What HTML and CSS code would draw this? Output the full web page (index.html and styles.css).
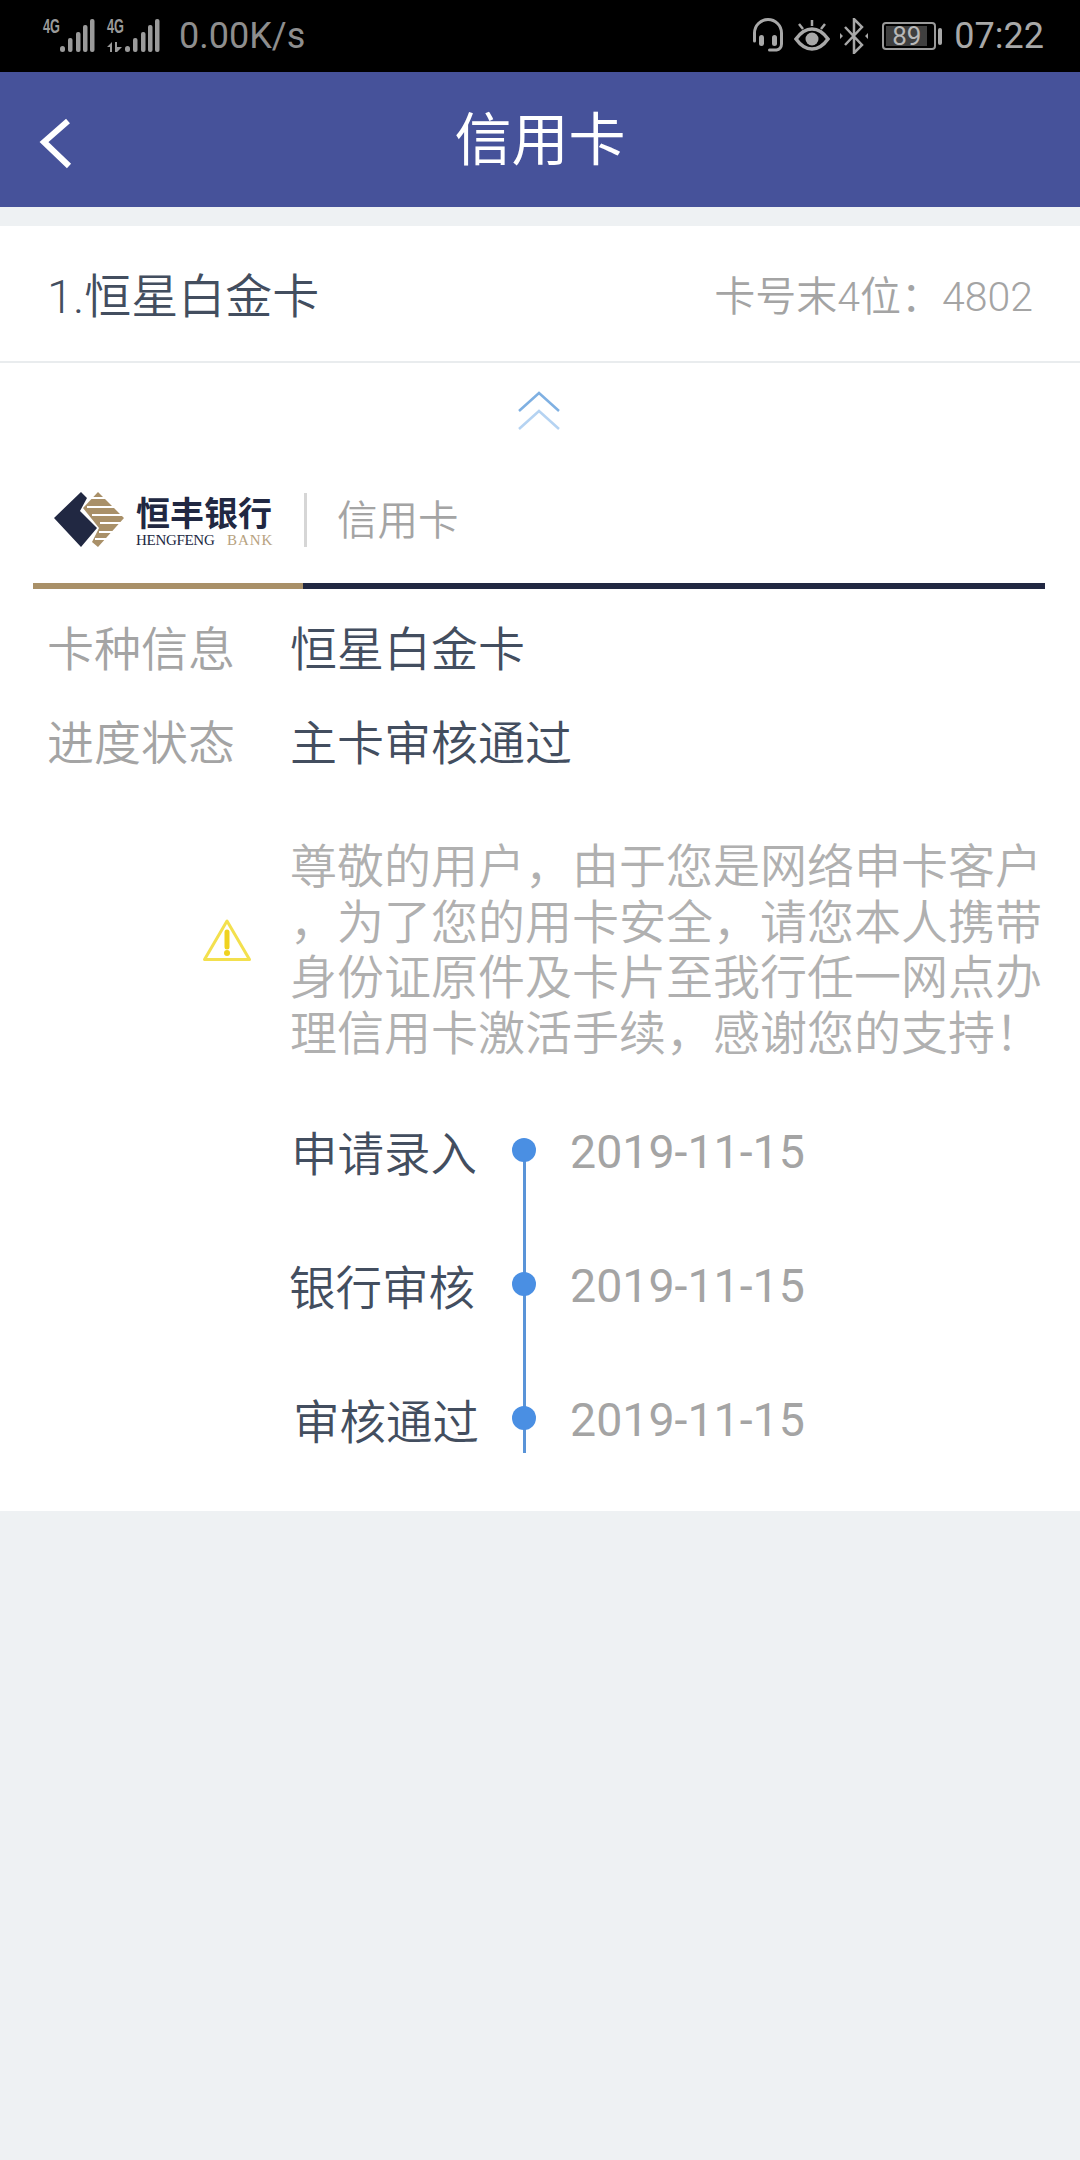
FILE: index.html
```html
<!DOCTYPE html>
<html lang="zh-CN">
<head>
<meta charset="utf-8">
<title>信用卡</title>
<link rel="stylesheet" href="styles.css">
</head>
<body>
<div class="status">
  <div class="status-side">
    <svg class="sig" width="56" height="36" viewBox="0 0 56 36"><text x="2" y="15" class="sig-t" textLength="17" lengthAdjust="spacingAndGlyphs">4G</text><g fill="#9a9a9a"><rect x="19" y="28" width="5" height="6" rx="2.500"/><rect x="27" y="20" width="4.500" height="14" rx="2"/><rect x="35" y="14" width="4.500" height="20" rx="2"/><rect x="42" y="7" width="4.500" height="27" rx="2"/><rect x="49" y="1" width="4.500" height="33" rx="2"/></g></svg>
    <svg class="sig sig2" width="56" height="36" viewBox="0 0 56 36"><text x="2" y="15" class="sig-t" textLength="17" lengthAdjust="spacingAndGlyphs">4G</text><g fill="#9a9a9a"><path d="M2 29l5-5v10H5v-5zM10 24h2v5l5 0-5 5h-2z"/><rect x="20" y="28" width="5" height="6" rx="2.500"/><rect x="28" y="20" width="4.500" height="14" rx="2"/><rect x="36" y="14" width="4.500" height="20" rx="2"/><rect x="43" y="7" width="4.500" height="27" rx="2"/><rect x="50" y="1" width="4.500" height="33" rx="2"/></g></svg>
    <span class="speed">0.00K/s</span>
  </div>
  <div class="status-side status-right">
    <svg width="32" height="36" viewBox="0 0 32 36" fill="none" stroke="#a8a8a8"><path d="M2.500 23V15a13.500 13.500 0 0 1 27 0v11a6 6 0 0 1-5 6h-7" stroke-width="3" stroke-linecap="round"/><rect x="7" y="17" width="5" height="11" rx="2.500" fill="#a8a8a8" stroke="none"/><rect x="20" y="17" width="5" height="11" rx="2.500" fill="#a8a8a8" stroke="none"/></svg>
    <svg class="eye" width="36" height="32" viewBox="0 0 36 32" fill="none" stroke="#a8a8a8" stroke-width="3.500"><path d="M2 19C7 12 12 9 18 9s11 3 16 10c-5 7-10 10-16 10S7 26 2 19z"/><circle cx="18" cy="19" r="6.500" fill="#a8a8a8" stroke="none"/><path d="M18 0v6M5 4l4 5M31 4l-4 5" stroke-width="2.500"/></svg>
    <svg class="bt" width="28" height="36" viewBox="0 0 28 36" fill="none" stroke="#a8a8a8" stroke-width="2.500"><path d="M5 9l17 18-8 8V1l8 8L5 27"/><path d="M0 15v6l3-3zM28 15v6l-3-3z" fill="#a8a8a8" stroke="none"/></svg>
    <div class="battery"><span class="battery-level">89</span></div><span class="battery-tip"></span>
    <span class="clock">07:22</span>
  </div>
</div>
<header class="nav">
  <svg class="back" width="34" height="52" viewBox="0 0 34 52" fill="none" stroke="#fff" stroke-width="6"><path d="M29 3L5 24l25 24"/></svg>
  <h1 class="nav-title">信用卡</h1>
</header>
<main class="card">
  <div class="card-head">
    <span class="card-name">1.恒星白金卡</span>
    <span class="card-no">卡号末4位：4802</span>
  </div>
  <div class="collapse">
    <svg width="42" height="40" viewBox="0 0 42 40" fill="none" stroke-width="2.500"><path d="M1 20L21 2l20 18" stroke="#7fb0e2"/><path d="M1 38L21 20l20 18" stroke="#b5d3f2"/></svg>
  </div>
  <div class="brand">
    <svg class="brand-mark" width="72" height="60" viewBox="0 0 72 60"><path d="M0 28L27 2l6 6-7 13 17 17-16 19z" fill="#212842"/><path d="M44 2l26 26-26 29-6-5 7-14-16-20z" fill="#a99068"/><path d="M35 8h24M33 17h33M38 25h33M46 33h25M45 42h21M41 49h15" stroke="#fff" stroke-width="1.800"/></svg>
    <div class="brand-name">
      <span class="brand-cn">恒丰银行</span>
      <span class="brand-en">HENGFENG <em>BANK</em></span>
    </div>
    <span class="brand-sep"></span>
    <span class="brand-sub">信用卡</span>
  </div>
  <div class="rule"><span class="rule-gold"></span><span class="rule-navy"></span></div>
  <div class="info">
    <div class="info-row"><span class="info-key">卡种信息</span><span class="info-val">恒星白金卡</span></div>
    <div class="info-row"><span class="info-key">进度状态</span><span class="info-val">主卡审核通过</span></div>
  </div>
  <div class="notice">
    <div class="notice-icon">
      <svg width="50" height="44" viewBox="0 0 50 44" fill="none"><path d="M25 3L2.500 41.500h45z" stroke="#f3e04e" stroke-width="3" stroke-linejoin="round"/><path d="M25 14v15" stroke="#efd21f" stroke-width="5" stroke-linecap="round"/><circle cx="25" cy="35" r="3" fill="#efd21f"/></svg>
    </div>
    <div class="notice-text">
      <span class="notice-line">尊敬的用户，由于您是网络申卡客户</span>
      <span class="notice-line">，为了您的用卡安全，请您本人携带</span>
      <span class="notice-line">身份证原件及卡片至我行任一网点办</span>
      <span class="notice-line">理信用卡激活手续，感谢您的支持！</span>
    </div>
  </div>
  <ol class="timeline">
    <li class="step"><span class="step-name step-a">申请录入</span><span class="step-node"></span><span class="step-date">2019-11-15</span></li>
    <li class="step"><span class="step-name">银行审核</span><span class="step-node"></span><span class="step-date">2019-11-15</span></li>
    <li class="step step-last"><span class="step-name step-c">审核通过</span><span class="step-node"></span><span class="step-date">2019-11-15</span></li>
  </ol>
</main>
</body>
</html>
```
FILE: styles.css
```css
* { box-sizing: border-box; }
html, body { margin: 0; padding: 0; }
body {
  width: 1080px;
  height: 2160px;
  background: #eef1f3;
  font-family: Roboto, "Noto Sans CJK SC", sans-serif;
  overflow: hidden;
}
.status {
  height: 72px;
  background: #000;
  display: flex;
  justify-content: space-between;
  align-items: center;
  padding: 0 36px 0 41px;
  color: #a3a3a3;
}
.status-side { display: flex; align-items: center; }
.sig-t { font: 700 20px "Liberation Sans", sans-serif; fill: #9a9a9a; }
.sig { display: block; overflow: visible; }
.sig2 { margin-left: 8px; }
.speed { font-size: 36px; font-weight: 400; color: #8e8e8e; margin-left: 18px; }
.eye { margin-left: 10px; }
.bt { margin-left: 10px; }
.battery {
  margin-left: 14px;
  width: 54px;
  height: 28px;
  border: 2px solid #9a9a9a;
  border-radius: 4px;
  padding: 2px;
  display: flex;
}
.battery-level {
  width: 41px;
  background: #3f3f3f;
  color: #b8b8b8;
  font-size: 26px;
  line-height: 20px;
  text-align: center;
}
.battery-tip { width: 4px; height: 17px; background: #a8a8a8; border-radius: 2px; margin-left: 2px; }
.clock { font-size: 36px; font-weight: 400; color: #a8a8a8; margin-left: 12px; }
.nav {
  height: 135px;
  background: #46529a;
  position: relative;
  display: flex;
  align-items: center;
  justify-content: center;
}
.back { position: absolute; left: 39px; top: 46px; }
.nav-title { margin: 2px 0 0; font-size: 57px; font-weight: 400; color: #fff; line-height: 1; }
.card {
  margin-top: 19px;
  height: 1285px;
  background: #fff;
}
.card-head {
  height: 137px;
  border-bottom: 2px solid #e9ecee;
  display: flex;
  align-items: center;
  justify-content: space-between;
  padding: 0 47px;
}
.card-name { font-size: 47px; color: #434e5f; font-weight: 350; margin-top: -2px; }
.card-no { font-size: 41px; color: #a4a4a4; font-weight: 350; margin-top: -2px; }
.collapse { height: 125px; display: flex; justify-content: center; padding: 28px 3px 0 0; }
.brand { display: flex; align-items: center; height: 60px; margin-top: 2px; padding-left: 54px; }
.brand-mark { display: block; }
.brand-name { display: flex; flex-direction: column; margin-left: 10px; width: 139px; }
.brand-cn { font: 700 34px/40px "Noto Sans CJK SC", sans-serif; color: #212842; white-space: nowrap; }
.brand-en { font: 400 15px/17px "Liberation Serif", serif; color: #212842; white-space: nowrap; letter-spacing: -.3px; }
.brand-en em { font-style: normal; color: #b7a27f; margin-left: 9px; letter-spacing: 1px; }
.brand-sep { width: 3px; height: 54px; background: #d6d6d6; margin-left: 29px; }
.brand-sub { font-size: 40.500px; font-weight: 350; color: #a4a4a4; margin: -5px 0 0 30px; }
.rule { display: flex; height: 6px; margin: 33px 35px 0 33px; }
.rule-gold { width: 270px; background: #a99068; }
.rule-navy { flex: 1; background: #212842; }
.info { margin-top: 9px; }
.info-row { display: flex; height: 94px; align-items: center; padding-left: 47px; font-size: 47px; font-weight: 350; }
.info-key { width: 243px; color: #a4a4a4; }
.info-val { color: #434e5f; }
.notice { display: flex; margin-top: 53px; align-items: center; }
.notice-icon { width: 290px; padding-left: 202px; margin-top: -21px; }
.notice-icon svg { display: block; }
.notice-text { width: 760px; font-size: 47px; font-weight: 350; color: #b0b0b0; }
.notice-line { display: block; height: 55.500px; line-height: 55.500px; white-space: nowrap; }
.timeline { list-style: none; margin: 22px 0 0; padding: 0; }
.step { display: flex; align-items: center; height: 134px; }
.step-name { width: 476px; padding-left: 289px; font-size: 46.500px; font-weight: 350; color: #434e5f; white-space: nowrap; }
.step-a { padding-left: 291px; }
.step-c { padding-left: 293px; }
.step-node {
  width: 94px;
  align-self: stretch;
  position: relative;
}
.step-node::before {
  content: "";
  position: absolute;
  left: 47px;
  top: 50%;
  height: 100%;
  width: 3px;
  background: #5a94d8;
}
.step-last .step-node::before { height: 35px; }
.step-node::after {
  content: "";
  position: absolute;
  left: 36px;
  top: 50%;
  margin-top: -12px;
  width: 24px;
  height: 24px;
  border-radius: 50%;
  background: #4a8fe3;
}
.step-date { font-size: 46.500px; font-weight: 400; color: #a4a4a4; margin-top: 3px; }
```
